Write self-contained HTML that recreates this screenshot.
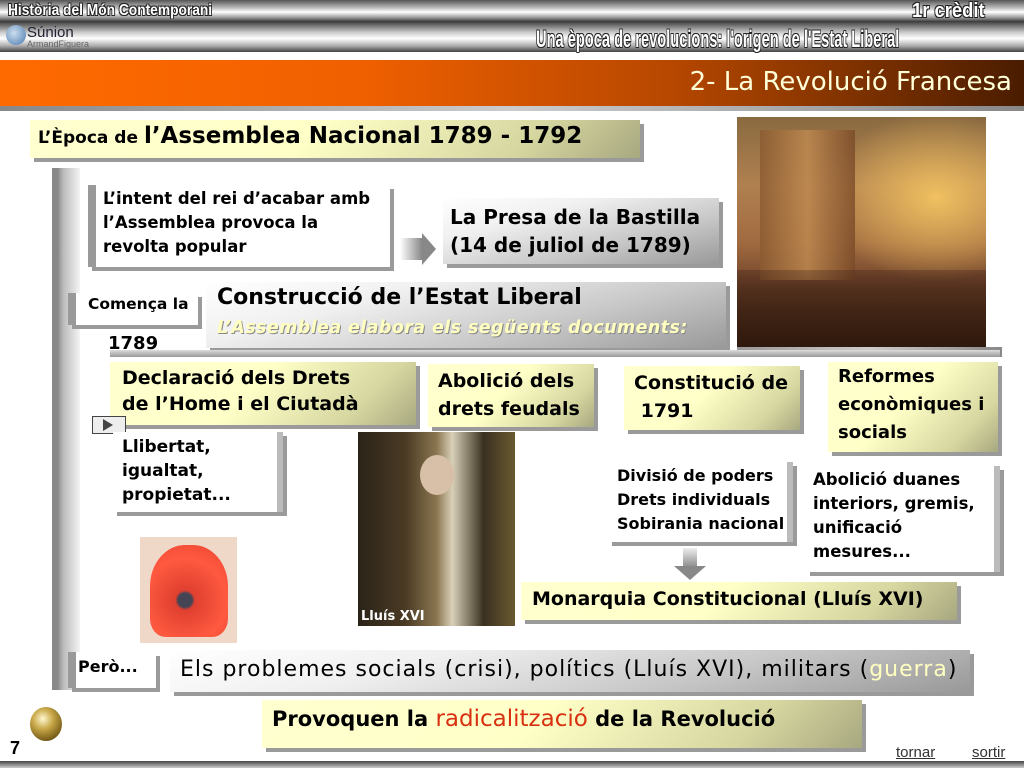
<!DOCTYPE html>
<html><head><meta charset="utf-8"><style>
*{margin:0;padding:0;box-sizing:border-box}
body{width:1024px;height:768px;position:relative;background:#fff;overflow:hidden;font-family:"DejaVu Sans","Liberation Sans",sans-serif;color:#000}
.a{position:absolute;white-space:nowrap}
.b{font-weight:bold}
.y{background:linear-gradient(135deg,#ffffd0 0%,#ffffc8 45%,#d6d6a0 80%,#a8a880 100%);box-shadow:4px 4px 0 #9a9a9a}
.g{background:linear-gradient(165deg,#fff 0%,#f0f0f0 30%,#c8c8c8 65%,#999 100%);box-shadow:4px 4px 0 #9a9a9a}
.w{background:#fff;box-shadow:4px 4px 0 #9a9a9a}
.hdr{font-family:"Liberation Sans",sans-serif;font-weight:bold;color:#fff;text-shadow:-1px -1px 0 #222,1px 1px 0 #222,1px -1px 0 #222,-1px 1px 0 #222;transform-origin:left top}
</style></head><body>
<div class="a" style="left:0;top:0;width:1024px;height:22px;background:linear-gradient(180deg,#555 0%,#bbb 35%,#fff 55%,#999 80%,#333 100%)"></div>
<div class="a" style="left:0;top:22px;width:1024px;height:30px;background:linear-gradient(180deg,#444 0%,#ccc 35%,#fff 55%,#aaa 80%,#444 100%)"></div>
<div class="a hdr" style="left:8px;top:2px;font-size:16px;transform:scaleX(.86)">Història del Món Contemporani</div>
<div class="a hdr" style="left:912px;top:0px;font-size:20px;transform:scaleX(.92)">1r crèdit</div>
<div class="a hdr" style="left:536px;top:26px;font-size:24px;transform:scaleX(.61)">Una època de revolucions: l'origen de l'Estat Liberal</div>
<div class="a" style="left:6px;top:25px;width:20px;height:20px;border-radius:50%;background:radial-gradient(circle at 40% 40%,#cde,#4a7ab0)"></div>
<div class="a" style="left:27px;top:24px;font-size:15px;color:#223;font-family:'Liberation Sans',sans-serif">Súnion</div>
<div class="a" style="left:27px;top:39px;font-size:9px;color:#666;font-family:'Liberation Sans',sans-serif">ArmandFiguera</div>
<div class="a" style="left:0;top:60px;width:1024px;height:46px;background:linear-gradient(90deg,#ff6a00 0%,#f06000 35%,#b84800 65%,#7a3000 85%,#4a1c00 100%)"></div>
<div class="a" style="right:12px;top:67px;font-size:26px;color:#ffffd8">2- La Revolució Francesa</div>
<div class="a" style="left:0;top:106px;width:1024px;height:5px;background:linear-gradient(90deg,#888,#ccc,#888)"></div>

<div class="a y" style="left:30px;top:120px;width:610px;height:38px"></div>
<div class="a b" style="left:38px;top:123px;font-size:23px"><span style="font-size:17px">L’Època de </span>l’Assemblea Nacional 1789 - 1792</div>

<div class="a" style="left:52px;top:168px;width:28px;height:522px;background:linear-gradient(90deg,#888 0%,#888 20%,#bbb 40%,#f4f4f4 100%)"></div>

<div class="a w" style="left:88px;top:185px;width:302px;height:82px;border-left:8px solid #999"></div>
<div class="a b" style="left:103px;top:187px;font-size:16.5px;line-height:24px">L’intent del rei d’acabar amb<br>l’Assemblea provoca la<br>revolta popular</div>
<div class="a" style="left:400px;top:238px;width:22px;height:22px;background:linear-gradient(90deg,#fff,#888)"></div>
<div class="a" style="left:422px;top:233px;width:0;height:0;border-top:16px solid transparent;border-bottom:16px solid transparent;border-left:14px solid #888"></div>
<div class="a g" style="left:443px;top:198px;width:276px;height:66px"></div>
<div class="a b" style="left:450px;top:203px;font-size:20px;line-height:28px">La Presa de la Bastilla<br>(14 de juliol de 1789)</div>

<div class="a w" style="left:68px;top:293px;width:130px;height:32px;border-left:8px solid #999"></div>
<div class="a b" style="left:88px;top:295px;font-size:15.5px">Comença la</div>
<div class="a b" style="left:108px;top:333px;font-size:18px">1789</div>
<div class="a g" style="left:206px;top:282px;width:520px;height:66px"></div>
<div class="a b" style="left:217px;top:285px;font-size:22px">Construcció de l’Estat Liberal</div>
<div class="a b" style="left:217px;top:318px;font-size:17.5px;color:#ffffc0;font-style:italic;letter-spacing:.4px;text-shadow:1px 1px 0 #888">L’Assemblea elabora els següents documents:</div>

<div class="a" style="left:737px;top:117px;width:249px;height:230px;background:radial-gradient(ellipse at 80% 35%,#f0c060 0%,transparent 40%),linear-gradient(180deg,#8a6a40 0%,#b08050 30%,#a06a40 55%,#6a4028 75%,#4a2a18 100%)"></div>
<div class="a" style="left:760px;top:130px;width:95px;height:150px;background:linear-gradient(90deg,#8a5a30,#c08a50,#7a4a28);opacity:.8"></div>
<div class="a" style="left:737px;top:270px;width:249px;height:77px;background:linear-gradient(180deg,rgba(60,30,20,.3),rgba(40,20,10,.8))"></div>
<div class="a" style="left:737px;top:347px;width:265px;height:10px;background:linear-gradient(90deg,#999,#ccc,#888)"></div>
<div class="a" style="left:110px;top:350px;width:890px;height:7px;background:linear-gradient(180deg,#ddd,#999)"></div>

<div class="a y" style="left:110px;top:362px;width:306px;height:63px"></div>
<div class="a b" style="left:122px;top:365px;font-size:19px;line-height:26px">Declaració dels Drets<br>de l’Home i el Ciutadà</div>
<div class="a y" style="left:428px;top:364px;width:166px;height:63px"></div>
<div class="a b" style="left:438px;top:367px;font-size:19px;line-height:28px">Abolició dels<br>drets feudals</div>
<div class="a y" style="left:624px;top:366px;width:176px;height:64px"></div>
<div class="a b" style="left:634px;top:369px;font-size:19px;line-height:28px">Constitució de<br>&nbsp;1791</div>
<div class="a y" style="left:828px;top:362px;width:170px;height:90px"></div>
<div class="a b" style="left:838px;top:363px;font-size:18px;line-height:28px">Reformes<br>econòmiques i<br>socials</div>

<div class="a" style="left:92px;top:416px;width:34px;height:18px;border:1px solid #444;background:#eee"></div>
<div class="a" style="left:103px;top:419px;border-top:6px solid transparent;border-bottom:6px solid transparent;border-left:10px solid #444"></div>

<div class="a w" style="left:113px;top:432px;width:170px;height:80px;border-right:6px solid #bbb"></div>
<div class="a b" style="left:122px;top:435px;font-size:17px;line-height:24px">Llibertat,<br>igualtat,<br>propietat...</div>

<div class="a" style="left:358px;top:432px;width:157px;height:194px;background:linear-gradient(90deg,#2a2418 0%,#4a3a24 30%,#8a7650 50%,#d8d0b8 60%,#3a3020 80%,#6a5a30 100%)"></div>
<div class="a" style="left:420px;top:455px;width:34px;height:40px;border-radius:50%;background:#d8c0a8"></div>
<div class="a b" style="left:361px;top:609px;font-size:13px;color:#fff">Lluís XVI</div>

<div class="a w" style="left:608px;top:462px;width:185px;height:80px;border-right:6px solid #bbb"></div>
<div class="a b" style="left:617px;top:464px;font-size:16px;line-height:24px">Divisió de poders<br>Drets individuals<br>Sobirania nacional</div>
<div class="a w" style="left:806px;top:466px;width:194px;height:106px;border-right:6px solid #bbb"></div>
<div class="a b" style="left:813px;top:468px;font-size:16.5px;line-height:24px">Abolició duanes<br>interiors, gremis,<br>unificació<br>mesures...</div>
<div class="a" style="left:683px;top:548px;width:14px;height:20px;background:linear-gradient(180deg,#eee,#888)"></div>
<div class="a" style="left:674px;top:566px;border-left:16px solid transparent;border-right:16px solid transparent;border-top:14px solid #888"></div>

<div class="a" style="left:140px;top:537px;width:97px;height:106px;background:#f0d8c8"></div>
<div class="a" style="left:150px;top:545px;width:78px;height:92px;border-radius:45% 45% 20% 20%;background:radial-gradient(circle at 45% 60%,#445 0,#445 10%,#e04030 14%,#ff5a40 60%,#e84030 100%)"></div>

<div class="a y" style="left:521px;top:582px;width:436px;height:38px"></div>
<div class="a b" style="left:532px;top:588px;font-size:19px">Monarquia Constitucional (Lluís XVI)</div>

<div class="a w" style="left:68px;top:652px;width:88px;height:36px;border-left:8px solid #999"></div>
<div class="a b" style="left:78px;top:657px;font-size:16px">Però...</div>
<div class="a g" style="left:170px;top:650px;width:800px;height:42px"></div>
<div class="a" style="left:180px;top:657px;font-size:22px;letter-spacing:1px">Els problemes socials (crisi), polítics (Lluís XVI), militars (<span style="color:#ffffc0">guerra</span>)</div>

<div class="a y" style="left:262px;top:700px;width:600px;height:48px"></div>
<div class="a b" style="left:272px;top:706px;font-size:21px">Provoquen la <span style="color:#d83010;font-size:23px;font-weight:normal">radicalització</span> de la Revolució</div>

<div class="a" style="left:30px;top:707px;width:32px;height:34px;border-radius:50%;background:radial-gradient(circle at 40% 35%,#fff8d0 0%,#c8a848 35%,#6a5010 80%,#3a2a08 100%)"></div>
<div class="a" style="left:10px;top:738px;font-size:18px;font-weight:bold;font-family:'Liberation Sans',sans-serif">7</div>
<div class="a" style="left:896px;top:744px;font-size:15px;color:#333;font-family:'Liberation Sans',sans-serif;text-decoration:underline">tornar</div>
<div class="a" style="left:972px;top:744px;font-size:15px;color:#333;font-family:'Liberation Sans',sans-serif;text-decoration:underline">sortir</div>
<div class="a" style="left:0;top:761px;width:1024px;height:7px;background:linear-gradient(180deg,#444,#ccc)"></div>
</body></html>
